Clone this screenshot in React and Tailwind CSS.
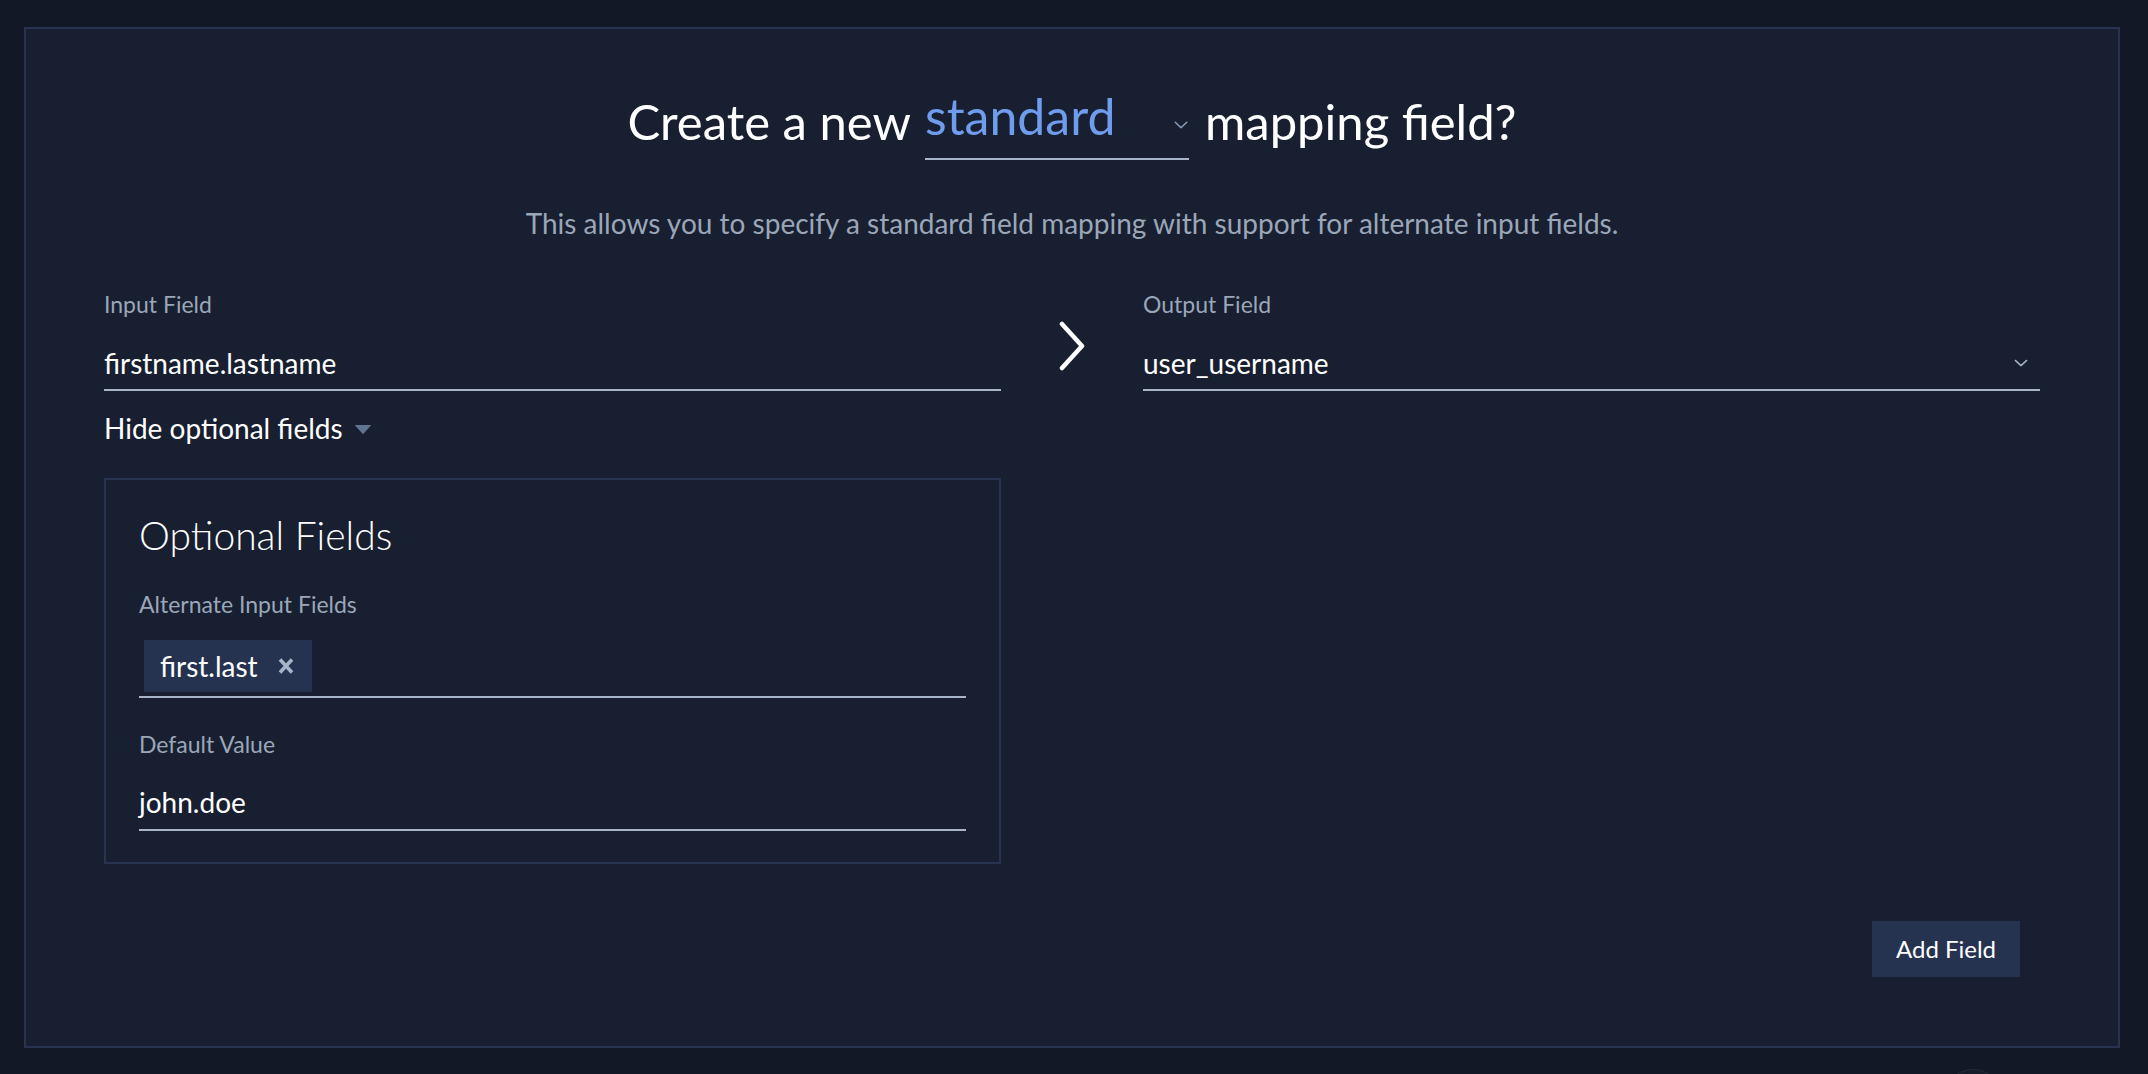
const FONT = { fontFamily: 'Lato, "Noto Sans", sans-serif' };

function SmallChevron({ className }) {
  return (
    <svg viewBox="0 0 16 9" className={className} fill="none" stroke="currentColor" strokeWidth="1.6" strokeLinecap="round" strokeLinejoin="round">
      <path d="M1.5 1.5 L8 7.5 L14.5 1.5" />
    </svg>
  );
}

function Field({ label, value, right }) {
  return (
    <div className="flex flex-col">
      <div className="text-[23px] leading-[28px] text-[#9aa7b9]">{label}</div>
      <div className="mt-[28px] flex items-center justify-between border-b-2 border-[#a7b5c9] pb-[9px]">
        <span className="text-[28px] leading-[34px] text-white">{value}</span>
        {right}
      </div>
    </div>
  );
}

export default function App() {
  return (
    <div className="relative min-h-screen w-full overflow-hidden bg-[#121826] pt-[27px] pl-[24px]" style={FONT}>
      <div className="flex h-[1021px] w-[2096px] flex-col border-2 border-[#27344f] bg-[#181f30] px-[78px] pt-[62px]">
        {/* heading */}
        <div className="flex items-start justify-center">
          <span className="text-[49px] leading-[60px] text-white">Create a new</span>
          <div className="ml-[14px] flex w-[264px] items-start justify-between border-b-2 border-[#a7b5c9] pb-[17px]">
            <span className="text-[50px] leading-[50px] text-[#6f9cec]">standard</span>
            <SmallChevron className="mt-[30px] h-[8px] w-[16px] text-[#8fa3bd]" />
          </div>
          <span className="ml-[16px] text-[49px] leading-[60px] text-white">mapping field?</span>
        </div>

        <p className="mt-[45px] text-center text-[28px] leading-[36px] text-[#9aa7b9]">
          This allows you to specify a standard field mapping with support for alternate input fields.
        </p>

        <div className="mt-[49px] grid grid-cols-[1fr_142px_1fr]">
          {/* left column */}
          <div className="flex flex-col">
            <Field label="Input Field" value="firstname.lastname" />

            <button className="mt-[20px] flex items-center gap-[10px] self-start text-[28px] leading-[34px] text-white">
              Hide optional fields
              <svg viewBox="0 0 20 12" className="mt-[4px] h-[10px] w-[20px]">
                <path d="M0 0 H20 L10 11 Z" fill="#5f7590" />
              </svg>
            </button>

            <div className="mt-[33px] flex flex-col border-2 border-[#27344f] px-[33px] pb-[31px] pt-[32px]">
              <div className="text-[39px] font-light leading-[46px] text-white">Optional Fields</div>

              <div className="mt-[32px] text-[23px] leading-[28px] text-[#9aa7b9]">Alternate Input Fields</div>
              <div className="mt-[22px] flex border-b-2 border-[#a7b5c9] pb-[4px] pl-[5px]">
                <span className="flex h-[52px] w-[168px] items-center justify-between bg-[#263350] pl-[16px] pr-[17px] text-[28px] text-white">
                  first.last
                  <svg viewBox="0 0 18 18" className="h-[18px] w-[18px]">
                    <path d="M3 2.5 L15 15.5 M15 2.5 L3 15.5" stroke="#a7b5c9" strokeWidth="3.6" />
                  </svg>
                </span>
              </div>

              <div className="mt-[32px] flex flex-col">
                <div className="text-[23px] leading-[28px] text-[#9aa7b9]">Default Value</div>
                <div className="mt-[27px] border-b-2 border-[#a7b5c9] pb-[10px]">
                  <span className="text-[28px] leading-[34px] text-white">john.doe</span>
                </div>
              </div>
            </div>
          </div>

          {/* arrow */}
          <div className="flex justify-center pt-[31px]">
            <svg viewBox="0 0 30 50" className="h-[50px] w-[30px]" fill="none" stroke="white" strokeWidth="4.5" strokeLinecap="round" strokeLinejoin="round">
              <path d="M5 3 L25 25 L5 47" />
            </svg>
          </div>

          {/* right column */}
          <div className="flex flex-col">
            <Field
              label="Output Field"
              value="user_username"
              right={<SmallChevron className="mr-[12px] h-[8px] w-[14px] text-[#a7b5c9]" />}
            />
          </div>
        </div>

        <div className="mt-auto mb-[69px] flex justify-end pr-[20px]">
          <button className="flex h-[56px] w-[148px] items-center justify-center bg-[#263350] text-[24px] text-white">
            Add Field
          </button>
        </div>
      </div>

      <div className="absolute left-[1943px] top-[1069px] h-[60px] w-[60px] rounded-full border border-[#232b3c] bg-[#161c2a]" />
    </div>
  );
}
